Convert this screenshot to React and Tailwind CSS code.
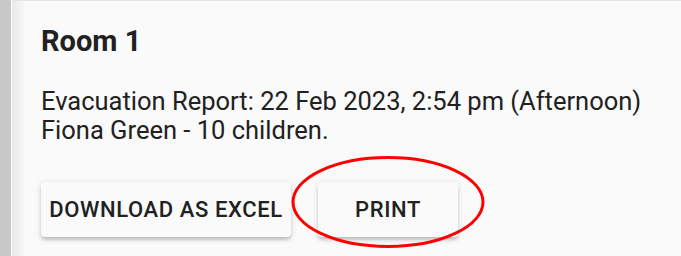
import React from "react";

export default function App() {
  const btnShadow =
    "shadow-[0_3px_1.5px_-3px_rgba(0,0,0,0.2),0_3px_3px_0_rgba(0,0,0,0.14),0_1.5px_7.5px_0_rgba(0,0,0,0.12)]";
  return (
    <div
      className="relative flex w-[681px] h-[256px] overflow-hidden bg-[#fafafa] text-[#212121]"
      style={{ fontFamily: "Roboto, 'Noto Sans', sans-serif" }}
    >
      <div className="w-[11px] shrink-0 bg-[#c8c8c8]" />
      <div className="w-[1px] shrink-0 bg-white" />
      <div className="flex-1 flex border-t border-[#e4e4e4]">
        <div className="w-[14px] shrink-0 bg-gradient-to-r from-[#e9e9e9] to-[#fafafa]" />
        <div className="flex-1 pl-[15px] pt-[23px]">
          <div className="text-[29px] leading-[34px] font-bold">Room 1</div>
          <div className="mt-[29px] text-[25.5px] leading-[29px] whitespace-nowrap">
            <div>Evacuation Report: 22 Feb 2023, 2:54 pm (Afternoon)</div>
            <div>Fiona Green - 10 children.</div>
          </div>
          <div className="mt-[37px] flex gap-[27px]">
            <button
              className={`h-[55px] w-[250px] rounded-[4px] bg-[#fafafa] text-[22px] leading-[37px] font-medium tracking-[0.6px] uppercase whitespace-nowrap ${btnShadow}`}
            >
              Download as Excel
            </button>
            <button
              className={`h-[55px] w-[140px] rounded-[4px] bg-[#fafafa] text-[22px] leading-[37px] font-medium tracking-[0.6px] uppercase ${btnShadow}`}
            >
              Print
            </button>
          </div>
        </div>
      </div>
      <svg
        className="absolute left-0 top-0 pointer-events-none"
        width="681"
        height="256"
        viewBox="0 0 681 256"
      >
        <ellipse cx="388" cy="202" rx="95" ry="44.5" fill="none" stroke="#ff0000" strokeWidth="3" />
      </svg>
    </div>
  );
}
